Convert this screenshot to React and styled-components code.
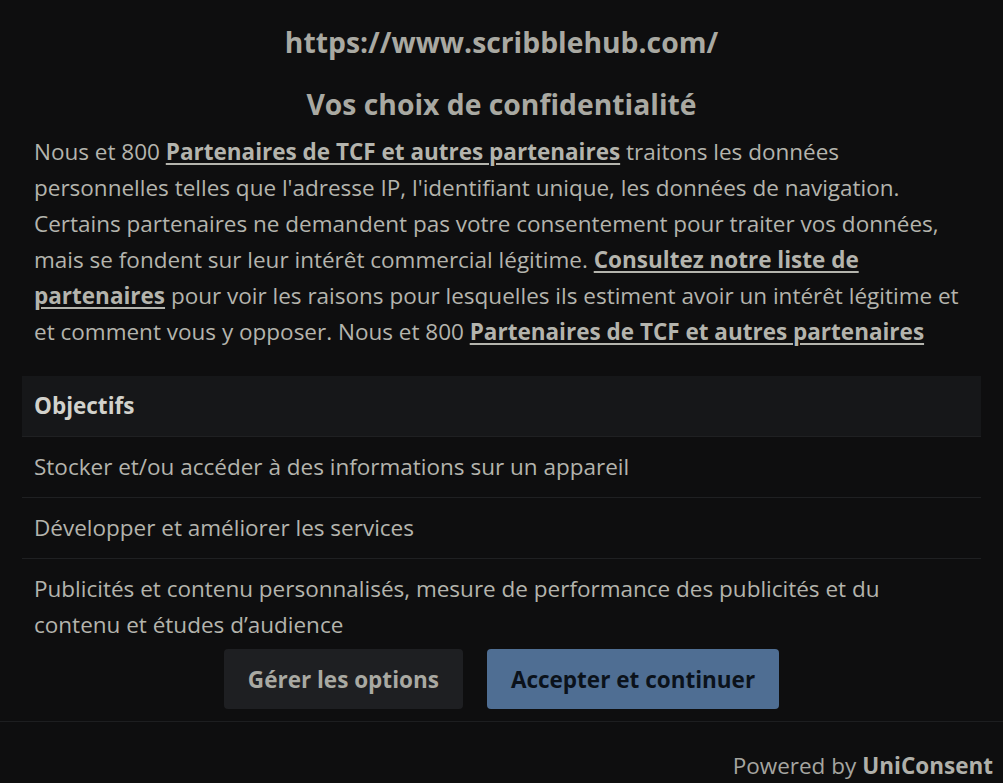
import styled, { createGlobalStyle } from "styled-components";

const GlobalStyle = createGlobalStyle`
  html, body {
    margin: 0;
    background: #0e0e0f;
  }
  body {
    font-family: "Open Sans", "Noto Sans", sans-serif;
    color: #b4b4ad;
  }
`;

const Banner = styled.div`
  width: 1003px;
  height: 783px;
  overflow: hidden;
  display: flex;
  flex-direction: column;
  background: #0e0e0f;
`;

const Content = styled.div`
  padding: 22px 22px 0;
`;

const SiteUrl = styled.h2`
  margin: 0;
  text-align: center;
  font-size: 28.3px;
  line-height: 40px;
  font-weight: 700;
  color: #a9a9a2;
`;

const Title = styled.h1`
  margin: 22px 0 0;
  text-align: center;
  font-size: 28.3px;
  line-height: 40px;
  font-weight: 700;
  color: #a9a9a2;
`;

const Intro = styled.p`
  margin: 10px 0 0;
  padding: 0 12px;
  font-size: 22.5px;
  line-height: 36px;
`;

const Link = styled.a`
  font-weight: 700;
  color: #b4b4ad;
  text-decoration: underline;
  text-underline-offset: 3px;
`;

const Purposes = styled.div`
  margin-top: 26px;
  display: flex;
  flex-direction: column;
`;

const PurposeHead = styled.div`
  background: #161719;
  padding: 12px;
  font-size: 22.5px;
  line-height: 36px;
  font-weight: 700;
  color: #d2d2cc;
`;

const PurposeRow = styled.div`
  padding: 12px;
  border-top: 1px solid #1f2022;
  font-size: 22.5px;
  line-height: 36px;
  &:last-child {
    padding-bottom: 0;
  }
`;

const Actions = styled.div`
  display: flex;
  justify-content: center;
  gap: 24px;
  padding: 6px 0 12px;
`;

const Button = styled.button`
  height: 60px;
  padding: 0 24px;
  border: none;
  border-radius: 4px;
  font-family: inherit;
  font-size: 22.5px;
  font-weight: 700;
  cursor: pointer;
  background: ${(p) => (p.$primary ? "#4f6e93" : "#1e1f22")};
  color: ${(p) => (p.$primary ? "#0b121b" : "#a9a9a2")};
`;

const Footer = styled.div`
  border-top: 1px solid #1d1e20;
  display: flex;
  justify-content: flex-end;
  padding: 24px 10px 0;
  font-size: 22.5px;
  line-height: 40px;
  color: #a5a5a0;
`;

const Brand = styled.strong`
  margin-left: 6px;
  font-weight: 700;
  color: #b0b0aa;
`;

const purposes = [
  "Stocker et/ou accéder à des informations sur un appareil",
  "Développer et améliorer les services",
  "Publicités et contenu personnalisés, mesure de performance des publicités et du contenu et études d’audience",
];

export default function App() {
  return (
    <Banner>
      <GlobalStyle />
      <Content>
        <SiteUrl>https://www.scribblehub.com/</SiteUrl>
        <Title>Vos choix de confidentialité</Title>
        <Intro>
          Nous et 800 <Link href="#">Partenaires de TCF et autres partenaires</Link> traitons les
          données personnelles telles que l'adresse IP, l'identifiant unique, les données de
          navigation. Certains partenaires ne demandent pas votre consentement pour traiter vos
          données, mais se fondent sur leur intérêt commercial légitime.{" "}
          <Link href="#">Consultez notre liste de partenaires</Link> pour voir les raisons pour
          lesquelles ils estiment avoir un intérêt légitime et et comment vous y opposer. Nous et
          800 <Link href="#">Partenaires de TCF et autres partenaires</Link>
        </Intro>
        <Purposes>
          <PurposeHead>Objectifs</PurposeHead>
          {purposes.map((p) => (
            <PurposeRow key={p}>{p}</PurposeRow>
          ))}
        </Purposes>
        <Actions>
          <Button>Gérer les options</Button>
          <Button $primary>Accepter et continuer</Button>
        </Actions>
      </Content>
      <Footer>
        Powered by <Brand>UniConsent</Brand>
      </Footer>
    </Banner>
  );
}
